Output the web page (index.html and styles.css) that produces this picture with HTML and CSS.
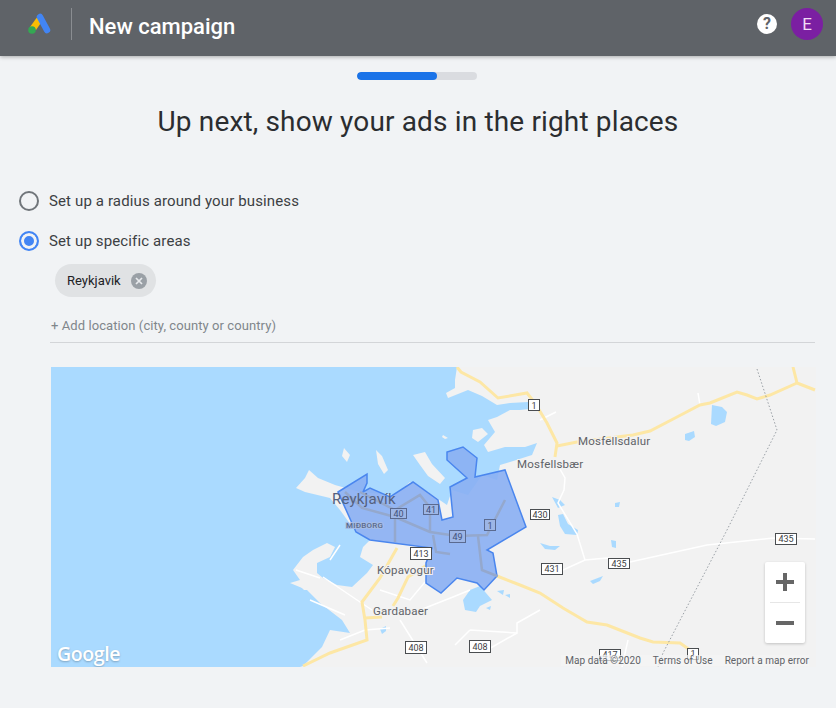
FILE: index.html
```html
<!DOCTYPE html>
<html lang="en">
<head>
  <meta charset="UTF-8">
  <meta name="viewport" content="width=device-width, initial-scale=1.0">
  <title>New campaign</title>
  <link rel="stylesheet" href="styles.css">
</head>

<body>
  <header class="topbar">
    <svg class="logo" viewBox="0 0 24 24" width="24" height="24">
      <path d="M9.500 6 12 5 14.500 10 9 18 3 15z" fill="#fbbc04"/>
      <line x1="13" y1="5" x2="20" y2="18" stroke="#4285f4" stroke-width="6.500" stroke-linecap="round"/>
      <circle cx="5" cy="18" r="3.800" fill="#34a853"/>
    </svg>
    <div class="divider"></div>
    <h1 class="page-name">New campaign</h1>
    <div class="help">?</div>
    <div class="avatar">E</div>
  </header>

  <div class="progress"><div class="progress-fill"></div></div>
  <h2 class="heading">Up next, show your ads in the right places</h2>

  <div class="radio-row">
    <span class="radio"></span>
    <span>Set up a radius around your business</span>
  </div>
  <div class="radio-row">
    <span class="radio radio-on"></span>
    <span>Set up specific areas</span>
  </div>

  <div class="chip">
    <span>Reykjavik</span>
    <svg class="chip-x" viewBox="0 0 16 16" width="16" height="16">
      <circle cx="8" cy="8" r="8" fill="#9aa0a6"/>
      <path d="M5 5l6 6M11 5l-6 6" stroke="#e8eaed" stroke-width="1.7"/>
    </svg>
  </div>

  <div class="add-location">+ Add location (city, county or country)</div>

  <div class="map">
    <svg class="map-svg" viewBox="51 367 765 300" width="765" height="300">
      <!-- sea, everything else is the land colour behind it -->
      <path class="sea" d="M51 367H457L455 380 455 388 446 393 448 398 468 390 482 396 497 405 510 403 528 402 538 408 520 410 510 410 497 417 488 420 495 432 484 445 488 452 505 447 525 447 537 443 532 455 510 462 500 465 497 480 482 475 468 495 452 490 447 505 425 490 410 482 395 495 360 492 335 485 318 478 309 470 305 478 296 488 305 492 330 498 340 510 356 532 370 540 363 547 360 557 373 565 367 573 352 587 337 585 323 578 317 573 317 563 330 557 335 547 327 543 313 550 303 557 293 570 300 580 290 583 307 590 320 603 342 620 350 633 330 630 322 647 303 666 300 667H51z"/>
      <path class="land" d="M344 448 350 455 347 462 342 456zM376 450 382 456 388 470 384 474 378 464zM413 455 425 452 432 464 445 478 440 484 428 476 420 465zM473 430 482 428 488 434 478 442 472 438zM443 435 448 438 445 439 442 437z"/>
      <path class="land" d="M298 584 312 583 316 590 304 590z"/>

      <path class="lake" d="M712 405 722 407 727 412 725 422 716 426 711 424zM685 434 694 431 695 437 689 441 685 440zM615 503 620 502 619 507 615 507zM558 515 563 514 568 524 578 530 577 535 565 534 560 526zM590 581 603 576 600 581 593 584zM611 540 616 541 616 548 612 547zM540 543 550 546 560 546 555 550 545 549zM552 497 560 500 565 505 558 508zM470 590 480 586 492 600 480 606 476 612 465 610 463 600zM380 629 386 626 386 631 382 634zM497 591 504 590 503 595zM505 595 510 594 510 598zM486 608 491 606 490 610z"/>

      <g class="road-white">
        <path d="M630 562 707 545 773 538 815 539"/>
        <path d="M563 570 585 560 607 558 630 562"/>
        <path d="M540 420 556 412M556 462 565 478 564 490 558 503 577 534 585 560"/>
        <path d="M700 405 698 393"/>
        <path d="M323 577 357 600 372 610M420 610 453 597 470 590"/>
        <path d="M400 620 427 663M470 630 517 633 517 623 540 610M487 650 517 633M470 630 455 645"/>
        <path d="M330 560 340 545M296 570 320 578M310 600 345 615M380 590 410 600 425 582"/>
        <path d="M340 640 365 630 390 628"/>
        <path d="M622 667 628 640"/>
      </g>
      <g class="road-yellow">
        <path d="M457 367 461 372 480 382 498 398 527 393 535 403 547 423 557 443 555 457"/>
        <path d="M557 446 577 442 633 435 650 431 677 417 700 405 710 403 737 392 747 395 757 399 770 395 797 383 793 367M797 383 815 390"/>
        <path d="M497 576 520 585 540 593 563 608 587 622 607 625 640 638 653 642 680 643 690 650"/>
        <path d="M397 548 380 578 362 602 365 620 367 640 330 653 303 666"/>
        <path d="M365 618 382 617M427 565 408 577 398 598 393 606"/>
      </g>
      <path class="boundary" d="M757 369 777 430 727 530 663 653 658 667"/>

      <polygon class="area" points="338,492 367,474 367,483 363,492 370,488 390,497 413,482 438,500 442,520 453,517 450,487 467,478 447,460 447,452 463,447 477,458 475,477 505,470 526,527 487,550 493,553 497,576 484,590 477,583 457,578 441,593 426,583 426,563 432,548 370,540 356,532"/>
      <g class="road-grey">
        <path d="M345 492 362 508 395 517 430 532 457 536 487 535 505 500"/>
        <path d="M395 517V542M430 510V532M433 535 436 552 450 554M478 536 482 570 497 576M360 492 395 510 420 495 432 510"/>
      </g>

      <text class="place place-big" x="332" y="504">Reykjavík</text>
      <text class="place place-tiny" x="346" y="528">MIÐBORG</text>
      <text class="place" x="377" y="574">Kópavogur</text>
      <text class="place" x="373" y="615">Gardabaer</text>
      <text class="place" x="517" y="468">Mosfellsbær</text>
      <text class="place" x="578" y="445">Mosfellsdalur</text>

      <g class="shield">
        <rect x="528.500" y="399.500" width="11" height="11"/><text x="534" y="408.500">1</text>
        <rect x="530.500" y="509.500" width="19" height="10"/><text x="540" y="518">430</text>
        <rect x="541.500" y="563.500" width="21" height="11"/><text x="552" y="572">431</text>
        <rect x="608.500" y="558.500" width="21" height="10"/><text x="619" y="567">435</text>
        <rect x="775.500" y="533.500" width="21" height="11"/><text x="786" y="542">435</text>
        <rect x="405.500" y="641.500" width="21" height="12"/><text x="416" y="651">408</text>
        <rect x="469.500" y="640.500" width="21" height="12"/><text x="480" y="650">408</text>
        <rect x="599.500" y="649.500" width="21" height="11"/><text x="610" y="658">417</text>
        <rect x="687.500" y="648.500" width="11" height="11"/><text x="693" y="657">1</text>
        <rect x="410.500" y="547.500" width="21" height="12"/><text x="421" y="557">413</text>
      </g>
      <g class="shield shield-over">
        <rect x="390.500" y="508.500" width="16" height="10"/><text x="398.500" y="517">40</text>
        <rect x="423.500" y="504.500" width="15" height="10"/><text x="431" y="513">41</text>
        <rect x="449.500" y="530.500" width="16" height="12"/><text x="457.500" y="540">49</text>
        <rect x="484.500" y="519.500" width="11" height="11"/><text x="490" y="529">1</text>
      </g>
    </svg>

    <div class="google-mark">Google</div>
    <div class="map-credits">
      <span>Map data ©2020</span>
      <span>Terms of Use</span>
      <span>Report a map error</span>
    </div>
    <div class="zoom-box">
      <svg viewBox="0 0 40 40" width="40" height="40"><path d="M11 18h18v4H11zM18 11h4v18h-4z" fill="#666"/></svg>
      <div class="zoom-line"></div>
      <svg viewBox="0 0 40 40" width="40" height="40"><path d="M11 18h18v4H11z" fill="#666"/></svg>
    </div>
  </div>
</body>

</html>
```

FILE: styles.css
```css
body {
  margin: 0;
  background-color: #f1f3f5;
  font-family: Roboto, "Liberation Sans", sans-serif;
  color: #3c4043;
  height: 708px;
  overflow: hidden;
}

.topbar {
  display: flex;
  align-items: center;
  box-sizing: border-box;
  height: 56px;
  padding-bottom: 8px;
  background-color: #5f6368;
  box-shadow: 0 1px 4px rgba(0, 0, 0, 0.3);
  color: white;
}

.logo {
  margin-left: 27px;
}

.divider {
  width: 1px;
  height: 32px;
  margin-left: 20px;
  background-color: #8a8d91;
}

.page-name {
  flex: 1;
  margin: 4px 0 0 17px;
  font-size: 22px;
  font-weight: 500;
}

.help {
  width: 20px;
  height: 20px;
  margin-right: 14px;
  border-radius: 50%;
  background-color: white;
  color: #5f6368;
  font-size: 16px;
  font-weight: 700;
  line-height: 20px;
  text-align: center;
}

.avatar {
  width: 32px;
  height: 32px;
  margin-right: 13px;
  border-radius: 50%;
  background-color: #7b1fa2;
  color: #f0dcf5;
  font-size: 17px;
  line-height: 32px;
  text-align: center;
}

.progress {
  width: 120px;
  height: 8px;
  margin: 16px 0 0 357px;
  border-radius: 4px;
  background-color: #dadce0;
  overflow: hidden;
}

.progress-fill {
  width: 80px;
  height: 8px;
  border-radius: 4px;
  background-color: #1a73e8;
}

.heading {
  margin: 22px 0 40px;
  font-size: 28px;
  font-weight: 400;
  letter-spacing: 0.15px;
  line-height: 39px;
  text-align: center;
  color: #2b2d30;
}

.radio-row {
  display: flex;
  align-items: center;
  height: 40px;
  margin-left: 19px;
  font-size: 15px;
  letter-spacing: 0.13px;
  gap: 10px;
}

.radio {
  box-sizing: border-box;
  width: 20px;
  height: 20px;
  border: 2px solid #70757a;
  border-radius: 50%;
}

.radio-on {
  border-color: #4285f4;
  background-color: #4285f4;
  box-shadow: inset 0 0 0 3px #f1f3f5;
}

.chip {
  display: flex;
  align-items: center;
  box-sizing: border-box;
  width: 101px;
  height: 33px;
  margin: 3px 0 0 55px;
  padding-left: 12px;
  gap: 10px;
  border-radius: 17px;
  background-color: #e0e2e4;
  font-size: 13px;
  color: #202124;
}

.add-location {
  box-sizing: border-box;
  width: 765px;
  height: 25px;
  margin: 21px 0 0 50px;
  padding-left: 1px;
  border-bottom: 1px solid #d3d5d8;
  font-size: 13px;
  letter-spacing: 0.08px;
  color: #80868b;
  line-height: 16px;
}

.map {
  position: relative;
  width: 765px;
  height: 300px;
  margin: 24px 0 0 51px;
  background-color: #f2f2f2;
  overflow: hidden;
}

.map-svg {
  display: block;
}

.sea {
  fill: #aadaff;
}

.land {
  fill: #f2f2f2;
}

.lake {
  fill: #aadaff;
}

.road-white path {
  fill: none;
  stroke: white;
  stroke-width: 1.5;
}

.road-yellow path {
  fill: none;
  stroke: #fde7a5;
  stroke-width: 3;
}

.road-grey path {
  fill: none;
  stroke: #94a8cd;
  stroke-width: 2.5;
}

.boundary {
  fill: none;
  stroke: #9aa0a6;
  stroke-width: 1;
  stroke-dasharray: 1.500 2;
}

.area {
  fill: #8aaff3;
  fill-opacity: 0.9;
  stroke: #4a86ee;
  stroke-width: 1.5;
}

.place {
  font-size: 11.500px;
  fill: #5f6368;
  stroke: #f2f2f2;
  stroke-width: 2px;
  paint-order: stroke;
  letter-spacing: 0.2px;
}

.place-big {
  font-size: 15px;
  fill: #55617e;
  stroke: none;
}

.place-tiny {
  font-size: 8px;
  font-weight: 500;
  fill: #5b6a8a;
  stroke: #a5bde8;
}

.shield rect {
  fill: white;
  stroke: #4a4d50;
  stroke-width: 1;
}

.shield text {
  font-size: 9px;
  text-anchor: middle;
  fill: #3c4043;
}

.shield-over rect {
  fill: #9db6e6;
  stroke: #5a6a90;
}

.shield-over text {
  fill: #3f5079;
}

.google-mark {
  position: absolute;
  left: 6px;
  bottom: 0;
  font-family: "Open Sans", sans-serif;
  font-size: 19.500px;
  font-weight: 600;
  letter-spacing: -0.4px;
  color: white;
  text-shadow: 0 1px 2px rgba(0, 0, 0, 0.25);
}

.map-credits {
  position: absolute;
  right: 7px;
  bottom: 1px;
  display: flex;
  gap: 12px;
  font-size: 10px;
  letter-spacing: 0.05px;
  color: #5f6368;
  background-color: rgba(245, 245, 245, 0.7);
  padding-left: 4px;
}

.zoom-box {
  position: absolute;
  right: 11px;
  top: 195px;
  width: 40px;
  height: 81px;
  background-color: white;
  border-radius: 2px;
  box-shadow: 0 1px 3px rgba(0, 0, 0, 0.2);
}

.zoom-box svg {
  display: block;
}

.zoom-line {
  width: 30px;
  height: 1px;
  margin: 0 auto;
  background-color: #e6e6e6;
}
```
